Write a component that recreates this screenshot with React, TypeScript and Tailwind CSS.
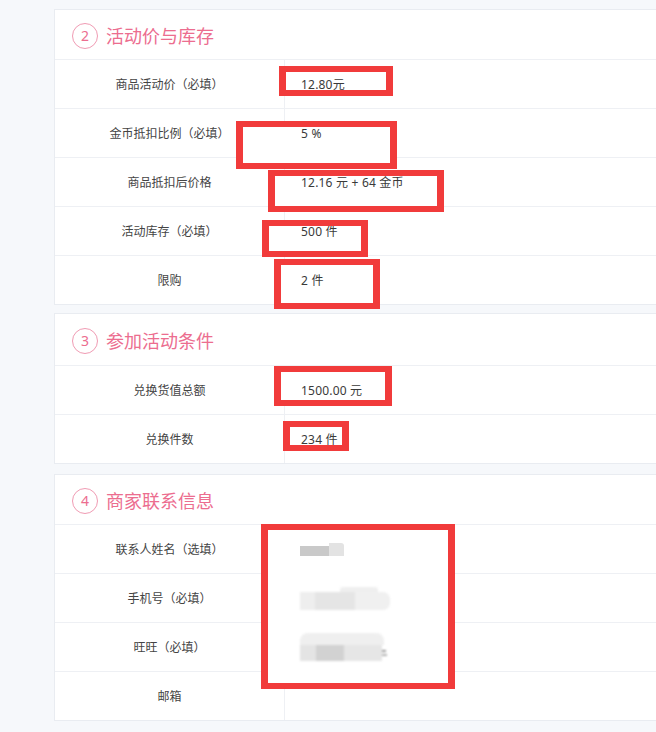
import React from "react";

type Row = { label: string; value?: React.ReactNode };

const rowsA: Row[] = [
  { label: "商品活动价（必填）", value: "12.80元" },
  { label: "金币抵扣比例（必填）", value: "5 %" },
  { label: "商品抵扣后价格", value: "12.16 元 + 64 金币" },
  { label: "活动库存（必填）", value: "500 件" },
  { label: "限购", value: "2 件" },
];

const rowsB: Row[] = [
  { label: "兑换货值总额", value: "1500.00 元" },
  { label: "兑换件数", value: "234 件" },
];

function Blur1() {
  return (
    <div className="flex items-end blur-[0.6px] ml-[-1px] mb-[2px]">
      <div className="w-[29px] h-[10px] bg-[#c9c9c9]" />
      <div className="w-[15px] h-[13px] bg-[#e3e3e3] rounded-tr-[3px]" />
    </div>
  );
}

function Blur2() {
  return (
    <div className="flex flex-col blur-[1px] ml-[-1px] mb-[2px]">
      <div className="ml-[40px] w-[38px] h-[5px] bg-[#efefef] rounded-t-[3px]" />
      <div className="flex h-[18px]">
        <div className="w-[15px] bg-[#eeeeee]" />
        <div className="w-[40px] bg-[#e5e5e5]" />
        <div className="w-[35px] bg-[#f0f0f0] rounded-r-[7px]" />
      </div>
    </div>
  );
}

function Blur3() {
  return (
    <div className="flex flex-col blur-[0.8px] ml-[-1px] mb-[2px]">
      <div className="w-[84px] h-[12px] bg-[#efefef] rounded-t-[8px]" />
      <div className="flex h-[16px] items-stretch">
        <div className="w-[16px] bg-[#e4e4e4]" />
        <div className="w-[28px] bg-[#d2d2d2]" />
        <div className="w-[38px] bg-[#e6e6e6]" />
        <div className="flex flex-col justify-center w-[6px]">
          <div className="w-[4px] h-[2px] bg-[#9a9a9a]" />
          <div className="w-[5px] h-[2px] mt-[2px] bg-[#b0b0b0]" />
        </div>
      </div>
    </div>
  );
}

const rowsC: Row[] = [
  { label: "联系人姓名（选填）", value: <Blur1 /> },
  { label: "手机号（必填）", value: <Blur2 /> },
  { label: "旺旺（必填）", value: <Blur3 /> },
  { label: "邮箱" },
];

function Card({
  num,
  title,
  rows,
  headerClass,
  className,
}: {
  num: number;
  title: string;
  rows: Row[];
  headerClass: string;
  className?: string;
}) {
  return (
    <div className={"w-[660px] bg-white border border-[#e9ecf1] " + (className ?? "")}>
      <div className={"flex items-center pl-[17px] pt-[2px] border-b border-[#eef0f4] " + headerClass}>
        <div className="w-[26px] h-[26px] rounded-full border border-[#f09bb3] flex items-center justify-center text-[14px] leading-none text-[#ec6d8f]">
          {num}
        </div>
        <div className="ml-[8px] text-[18px] leading-none text-[#ec6d8f]">{title}</div>
      </div>
      {rows.map((r, i) => {
        const last = i === rows.length - 1;
        return (
          <div
            key={r.label}
            className={
              last
                ? "flex h-[48px]"
                : "flex h-[49px] border-b border-[#eef0f4]"
            }
          >
            <div className="w-[230px] shrink-0 flex items-center justify-center pt-[2px] border-r border-[#eef0f4] text-[#444]">
              {r.label}
            </div>
            <div className="relative z-10 flex items-center pl-[16px] pt-[2px] text-[#3a3a3a] whitespace-pre tracking-[0.2px]">
              {r.value}
            </div>
          </div>
        );
      })}
    </div>
  );
}

const boxes = [
  { id: 1, cls: "left-[279px] top-[66px] w-[114px] h-[30px]" },
  { id: 2, cls: "left-[236px] top-[121px] w-[161px] h-[48px]" },
  { id: 3, cls: "left-[268px] top-[170px] w-[176px] h-[42px]" },
  { id: 4, cls: "left-[262px] top-[220px] w-[106px] h-[37px]" },
  { id: 5, cls: "left-[274px] top-[259px] w-[106px] h-[50px]" },
  { id: 6, cls: "left-[274px] top-[366px] w-[118px] h-[40px]" },
  { id: 7, cls: "left-[283px] top-[421px] w-[66px] h-[30px]" },
  { id: 8, cls: "left-[261px] top-[524px] w-[194px] h-[165px]" },
];

export default function App() {
  return (
    <div className="relative w-[656px] h-[732px] overflow-hidden bg-[#f6f8fb] font-['Noto_Sans','Noto_Sans_CJK_SC',sans-serif] text-[12px]">
      {boxes.map((b) => (
        <div key={"f" + b.id} className={"absolute bg-white " + b.cls} />
      ))}
      <div className="flex flex-col pl-[54px] pt-[9px]">
        <Card num={2} title="活动价与库存" rows={rowsA} headerClass="h-[50px]" />
        <Card num={3} title="参加活动条件" rows={rowsB} headerClass="h-[52px]" className="mt-[8px]" />
        <Card num={4} title="商家联系信息" rows={rowsC} headerClass="h-[50px]" className="mt-[10px]" />
      </div>
      {boxes.map((b) => (
        <div
          key={"b" + b.id}
          className={"absolute z-20 border-x-[7px] border-y-[6px] border-[#f13b3b] " + b.cls}
        />
      ))}
    </div>
  );
}
